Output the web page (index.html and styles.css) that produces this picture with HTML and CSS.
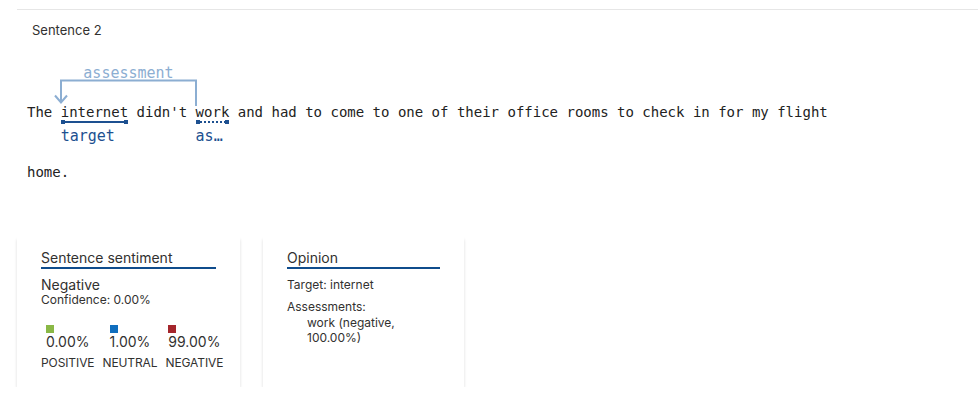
FILE: index.html
```html
<!DOCTYPE html>
<html lang="en">
<head>
<meta charset="utf-8">
<title>Sentence 2</title>
<link rel="stylesheet" href="styles.css">
</head>
<body>
<div class="page">
  <section class="sentence-panel">
    <div class="heading">Sentence 2</div>
    <div class="sentence">
      <svg class="arc" width="180" height="50" viewBox="0 0 180 50">
        <path class="arc-line" d="M34 43 L34 20.5 L169 20.5 L169 46"/>
        <path class="arc-line" d="M28 35.5 L34 42.5 L40 35.5"/>
        <text class="arc-text" x="101.5" y="18" text-anchor="middle">assessment</text>
      </svg>The <span class="tok">internet<span class="mark"></span><span class="tag">target</span></span> didn't <span class="tok">work<span class="mark dotted"></span><span class="tag">assessment</span></span> and had to come to one of their office rooms to check in for my flight home.
    </div>
  </section>

  <div class="cards">
    <div class="card card-sentiment">
      <div class="card-title">Sentence sentiment</div>
      <div class="sent-label">Negative</div>
      <div class="confidence">Confidence: 0.00%</div>
      <div class="scores">
        <div class="score">
          <div class="score-val"><span class="swatch swatch-pos"></span><span class="pct">0.00%</span></div>
          <div class="score-label">Positive</div>
        </div>
        <div class="score">
          <div class="score-val"><span class="swatch swatch-neu"></span><span class="pct">1.00%</span></div>
          <div class="score-label">Neutral</div>
        </div>
        <div class="score">
          <div class="score-val"><span class="swatch swatch-neg"></span><span class="pct">99.00%</span></div>
          <div class="score-label">Negative</div>
        </div>
      </div>
    </div>

    <div class="card card-opinion">
      <div class="card-title">Opinion</div>
      <div class="op-target">Target: internet</div>
      <div class="op-head">Assessments:</div>
      <ul class="op-list">
        <li>work (negative, 100.00%)</li>
      </ul>
    </div>
  </div>
</div>
</body>
</html>
```

FILE: styles.css
```css
html, body {
  margin: 0;
  padding: 0;
  background: #ffffff;
}

.page {
  padding: 9px 0 0 17px;
  font-family: Inter, "Noto Sans", "Liberation Sans", sans-serif;
  color: #323130;
}

.sentence-panel {
  border-top: 1px solid #e6e6e6;
}

.heading {
  margin: 12px 0 0 15px;
  font-size: 13px;
  line-height: 16px;
  color: #323130;
}

.sentence {
  position: relative;
  margin: 44px 0 0 10px;
  max-width: 840px;
  font-family: "DejaVu Sans Mono", "Liberation Mono", monospace;
  font-size: 14px;
  line-height: 60px;
  color: #222222;
}

.arc {
  position: absolute;
  left: 0;
  top: -22px;
  overflow: visible;
}

.arc-line {
  fill: none;
  stroke: #8caed2;
  stroke-width: 2;
}

.arc-text {
  font-family: "DejaVu Sans Mono", "Liberation Mono", monospace;
  font-size: 15px;
  fill: #8caed2;
}

.tok {
  position: relative;
}

.mark {
  position: absolute;
  left: 0;
  right: 0;
  top: 17px;
  height: 2px;
  background: #1d5090;
}

.mark::before,
.mark::after {
  content: "";
  position: absolute;
  top: -1px;
  width: 4px;
  height: 4px;
  background: #1d5090;
}

.mark::before { left: 0; }
.mark::after { right: 0; }

.mark.dotted {
  background: repeating-linear-gradient(90deg, #1d5090 0 2px, transparent 2px 4px);
}

.tag {
  position: absolute;
  left: 0;
  right: 0;
  top: 23px;
  font-size: 15px;
  line-height: 18px;
  color: #1d5090;
  white-space: nowrap;
  overflow: hidden;
  text-overflow: ellipsis;
}

.cards {
  display: flex;
  gap: 23px;
  margin-top: 35px;
}

.card {
  box-sizing: border-box;
  height: 150px;
  padding: 12px 24px;
  background: #ffffff;
  box-shadow: 0 1.5px 3px 0 rgba(0, 0, 0, 0.14), 0 0 0.6px 0 rgba(0, 0, 0, 0.07);
}

.card-sentiment { width: 223px; }
.card-opinion { width: 201px; }

.card-title {
  font-size: 14px;
  line-height: 18px;
  border-bottom: 2px solid #0f4c8c;
  white-space: nowrap;
}

.sent-label {
  margin-top: 7px;
  font-size: 14px;
  line-height: 17px;
}

.confidence {
  font-size: 12px;
  line-height: 14px;
}

.scores {
  display: flex;
  gap: 8px;
  margin-top: 18px;
}

.score {
  flex-shrink: 0;
  display: flex;
  flex-direction: column;
  align-items: center;
}

.score-val {
  display: flex;
  flex-direction: column;
  align-items: flex-start;
}

.swatch {
  display: block;
  width: 8px;
  height: 8px;
}

.swatch-pos { background: #8ab846; }
.swatch-neu { background: #106ebe; }
.swatch-neg { background: #a4262c; }

.pct {
  font-size: 14px;
  line-height: 17px;
}

.score-label {
  margin-top: 6px;
  font-size: 12px;
  line-height: 14px;
  text-transform: uppercase;
  letter-spacing: -0.1px;
  white-space: nowrap;
}

.op-target {
  margin-top: 9px;
  font-size: 12px;
  line-height: 14px;
}

.op-head {
  margin-top: 8px;
  font-size: 12px;
  line-height: 14px;
}

.op-list {
  list-style: none;
  margin: 1px 0 0 0;
  padding: 0 0 0 20px;
  font-size: 12px;
  line-height: 15px;
}
```
